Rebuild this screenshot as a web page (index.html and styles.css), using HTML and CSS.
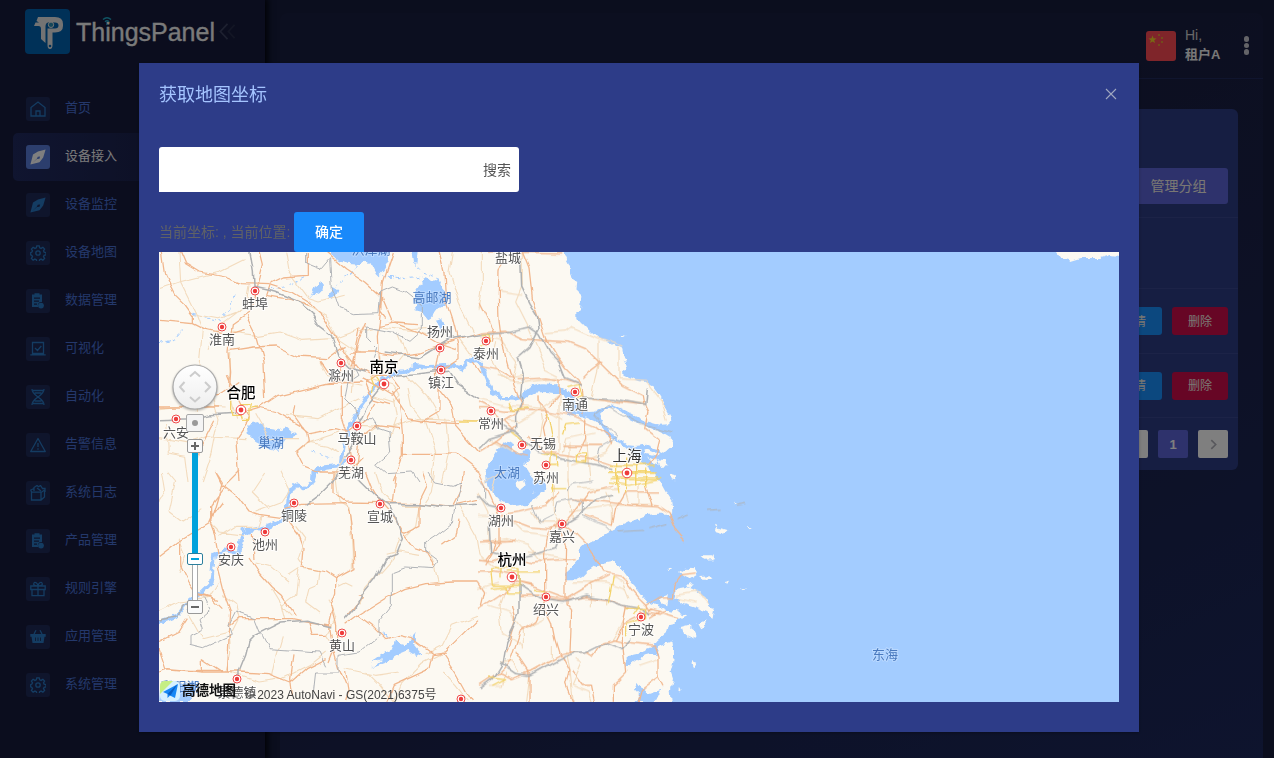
FILE: index.html
```html
<!DOCTYPE html>
<html lang="zh-CN">
<head>
<meta charset="utf-8">
<title>ThingsPanel</title>
<link rel="stylesheet" href="styles.css">
</head>
<body>
<svg class="defs" width="0" height="0">
  <symbol id="i-home" viewBox="0 0 16 16"><path class="ln" d="M1 6.500 8 1l7 5.500V15H1zM6 15v-5h4v5"/></symbol>
  <symbol id="i-pen" viewBox="0 0 16 16"><path class="fl" fill-rule="evenodd" d="M.4 15.600 3 5.500 8 2.600 15.600.4l-2.400 8-3.700 4.800zM2.300 13.900l4.700-3.900 2.500-.3.600-2.300-2.300.4-1 2z"/></symbol>
  <symbol id="i-gear" viewBox="0 0 16 16"><path class="ln" d="M6.800.8h2.400l.5 2 1.400.6 1.800-1.100 1.700 1.700-1.100 1.800.6 1.300 1.900.5v2.200l-1.900.6-.6 1.300 1.100 1.800-1.700 1.700-1.800-1.100-1.400.6-.5 1.900H6.800l-.5-1.900-1.400-.6-1.800 1.100-1.700-1.700 1.100-1.800-.6-1.300L.7 9.800V7.600l1.200-.5.6-1.300L1.400 4l1.700-1.700 1.800 1.100 1.400-.6z"/><circle class="ln" cx="8" cy="8" r="2.200"/></symbol>
  <symbol id="i-clip" viewBox="0 0 16 16"><path class="fl" fill-rule="evenodd" d="M2 1.500h2.500V.3h5V1.500H12V9a3.500 3.500 0 0 0-3.800 5H2zm2 3v1.200h6V4.500zm0 3V8.700h5V7.500zm0 3v1.200h3v-1.200z"/><circle class="fl" cx="11" cy="12.600" r="2.900"/></symbol>
  <symbol id="i-view" viewBox="0 0 16 16"><path class="ln" d="M2.500 1.500h11v11h-11zM.3 13.900h15.400M5 7l2.500 2.500L11.300 5"/></symbol>
  <symbol id="i-dna" viewBox="0 0 16 16"><path class="ln" d="M2 0c0 8 12 8 12 16M14 0c0 8-12 8-12 16M3 1.500h10M4.500 4h7M4.500 12h7M3 14.500h10"/></symbol>
  <symbol id="i-warn" viewBox="0 0 16 16"><path class="ln" stroke-linejoin="round" d="M8 1.500 15.300 14.500H.7zM8 6v4M8 11.300v1.500"/></symbol>
  <symbol id="i-box" viewBox="0 0 16 16"><path class="ln" d="M1.500 7v8h9.500l3.500-3V5l-3 2.200zM1.500 7 .8 5 4 3.500M11 7.500V15M4 6V2.500l3-2 1.500 1.300 2-1.300 2 3 2.500 0V7M7 3l4 3"/></symbol>
  <symbol id="i-gift" viewBox="0 0 16 16"><path class="ln" d="M.8 5h14.400v3.500H.8zM2 8.500v6.200h12V8.500M8 5v9.500M8 5C4 5 3 3.500 4 2s3.500 0 4 3c.5-3 3-4.500 4-3s0 3-4 3"/></symbol>
  <symbol id="i-basket" viewBox="0 0 16 16"><path class="fl" fill-rule="evenodd" d="M.3 5h15.400v2.800h-1.200L13.500 14h-11l-1-6.200H.3zM5 8.500V12h.8V8.500zm2.600 0V12h.8V8.500zm2.600 0V12h.8V8.500z"/><path class="ln" d="M4 5 6 1.300M12 5 10 1.300"/></symbol>
</svg>

<div class="app">
  <aside class="sidebar">
    <div class="brand">
      <svg class="mark" viewBox="0 0 45 45"><rect width="45" height="45" rx="4" fill="#0062b0"/><path fill="#e6e6e6" d="M11.500 12 13 8H30q8 0 8 7v2q0 6.500-8 6.500H27.500V36q0 4-2.500 4t-2.500-4V19.500H30q3.500 0 3.500-3T30 13.500h-7q-2.500.5-2.500 4V34l-4.500-4V20q0-3-2.500-3H9l1.500-3.500H14z"/><circle cx="26" cy="15.800" r="2.700" fill="#2b8fb4" stroke="#e6e6e6"/><circle cx="25" cy="37" r="1.300" fill="#0062b0"/></svg>
      <span class="name">ThingsPanel</span>
      <svg class="wifi" viewBox="0 0 10 9"><path d="M1 2.500Q5-1 9 2.500M3 4.700Q5 3 7 4.700"/><circle cx="5" cy="7.500" r=".8"/></svg>
      <svg class="fold" viewBox="0 0 18 18"><path d="M9 1 1.500 9 9 17"/><path class="dim" d="M16.500 2 10 9l6.500 7"/></svg>
    </div>
    <nav class="menu">
      <a class="item"><i><svg><use href="#i-home"/></svg></i><span>首页</span></a>
      <a class="item on"><i><svg><use href="#i-pen"/></svg></i><span>设备接入</span></a>
      <a class="item"><i><svg><use href="#i-pen"/></svg></i><span>设备监控</span></a>
      <a class="item"><i><svg><use href="#i-gear"/></svg></i><span>设备地图</span></a>
      <a class="item"><i><svg><use href="#i-clip"/></svg></i><span>数据管理</span></a>
      <a class="item"><i><svg><use href="#i-view"/></svg></i><span>可视化</span></a>
      <a class="item"><i><svg><use href="#i-dna"/></svg></i><span>自动化</span></a>
      <a class="item"><i><svg><use href="#i-warn"/></svg></i><span>告警信息</span></a>
      <a class="item"><i><svg><use href="#i-box"/></svg></i><span>系统日志</span></a>
      <a class="item"><i><svg><use href="#i-clip"/></svg></i><span>产品管理</span></a>
      <a class="item"><i><svg><use href="#i-gift"/></svg></i><span>规则引擎</span></a>
      <a class="item"><i><svg><use href="#i-basket"/></svg></i><span>应用管理</span></a>
      <a class="item"><i><svg><use href="#i-gear"/></svg></i><span>系统管理</span></a>
    </nav>
  </aside>
  <main class="main">
    <header class="top">
      <svg class="flag" viewBox="0 0 30 30"><rect width="30" height="30" rx="3" fill="#ff4a55"/><path fill="#f2d028" d="m6.500 4.500 1.100 2.800 2.900.1-2.300 1.800.9 2.900-2.600-1.700-2.500 1.700.8-2.900-2.300-1.800 3-.1z"/><g fill="#e0b030"><circle cx="13" cy="4" r="1"/><circle cx="16" cy="7" r="1"/><circle cx="16" cy="11" r="1"/><circle cx="13" cy="14" r="1"/></g></svg>
      <div class="user"><span>Hi,</span><b>租户A</b></div>
      <div class="dots"><i></i><i></i><i></i></div>
    </header>
    <section class="card">
      <div class="tools"><button class="btn group">管理分组</button></div>
      <div class="thead"></div>
      <div class="trow"><button class="btn info">详情</button><button class="btn del">删除</button></div>
      <div class="trow last"><button class="btn info">详情</button><button class="btn del">删除</button></div>
      <div class="pager"><span></span><span class="cur">1</span><span><svg viewBox="0 0 8 10"><path d="M2 1l4 4-4 4"/></svg></span></div>
    </section>
  </main>
</div>

<div class="mask">
  <div class="modal">
    <div class="mhead"><h3>获取地图坐标</h3><svg viewBox="0 0 12 12"><path d="M1 1l10 10M11 1 1 11"/></svg></div>
    <div class="search"><span>搜索</span></div>
    <div class="where"><span>当前坐标: , 当前位置:</span><button>确定</button></div>
    <div class="map">
      <svg class="canvas" viewBox="0 0 960 450">
        <defs>
          <filter id="rough" x="0" y="0" width="960" height="450" filterUnits="userSpaceOnUse" color-interpolation-filters="sRGB"><feTurbulence type="fractalNoise" baseFrequency=".045" numOctaves="2" seed="4"/><feDisplacementMap in="SourceGraphic" scale="8" xChannelSelector="R" yChannelSelector="G"/></filter>
          <filter id="shore" x="0" y="0" width="960" height="450" filterUnits="userSpaceOnUse" color-interpolation-filters="sRGB"><feTurbulence type="fractalNoise" baseFrequency=".14" numOctaves="2" seed="9"/><feDisplacementMap in="SourceGraphic" scale="7" xChannelSelector="R" yChannelSelector="G"/></filter>
          <g id="dot"><circle r="4" fill="#fff" stroke="#ef4a4a" stroke-width="1"/><circle r="2.200" fill="#ee3b3b"/></g>
          <g id="dotL"><circle r="4.800" fill="#fff" stroke="#ef4a4a" stroke-width="1"/><circle r="2.400" fill="#ee3b3b"/></g>
        </defs>
        <rect width="960" height="450" fill="#fcf9f2"/>
        <!-- sea, rivers and lakes -->
        <g filter="url(#shore)">
          <g transform="translate(320 0) scale(.33333)">
            <path class="sea" d="M257-30V0L265 20 275 40V60L280 80 295 90 292 115 307 130 303 175 292 180V205L312 215 330 235 350 252 390 270 430 292 433 310 445 350 425 358 440 370 470 385 500 390 520 398 540 425 552 445 560 470 578 503 570 517 540 518 500 508 470 492 430 470 400 457 375 464 345 482 320 484 305 478 290 455 278 425 262 412 225 396 190 394 160 402 135 422V440L165 422 200 420 240 425 258 438 268 462 255 478 275 490 320 494 350 508 375 532 390 556 418 566 430 585 455 598 470 610 490 628 510 640 518 658 530 675 545 693 560 720 580 750 583 775 570 785 540 785 500 790 450 810 400 835 350 865 320 875 300 895V920L275 950 258 965V985L290 985 310 975 330 955 350 940 400 930 420 940 450 980 470 1005 500 1045 530 1060 560 1075 625 1090 600 1102 590 1115 570 1120 565 1140 535 1165 515 1190 490 1200 445 1210 438 1238 460 1235 480 1215 520 1205 533 1210 545 1178 580 1168 585 1200 583 1230 575 1260 582 1280 575 1310 582 1400H2000V-30Z"/>
            <path class="land" d="M362 490 380 472 400 462 430 480 450 500 480 515 520 530 560 550 585 565 582 585 565 600 530 592 500 578 470 582 445 580 420 562 395 540 375 515ZM495 588 520 600 545 605 525 613 500 605ZM505 615 530 625 540 640 520 635ZM535 622 562 625 565 640 545 642ZM575 668 590 672 592 685 578 682Z"/>
            <path class="river" d="M-10 320 10 340 20 375 40 420 70 437 110 438 140 430"/>
            <path class="sea" d="M60 590 80 565 105 580 100 595 115 602 155 595 150 625 135 640 165 680 195 690 205 710 180 735 150 755 100 762 60 745 40 720 20 685 18 660 35 625 50 600Z"/>
            <path class="land" d="M110 690 135 685 140 700 125 712 112 702ZM162 715 168 722 160 725Z"/>
            <path class="sea" d="M440 1215 470 1207 490 1214 470 1228 455 1240 440 1238ZM465 1310 475 1290 490 1310 505 1325 550 1310 530 1350H470L480 1325Z"/>
          </g>
          <g class="land" transform="translate(320 220) scale(.33333)">
            <path d="M583 375 590 350 620 345 650 355 680 380 705 415 700 445 685 420 650 408 610 395ZM600 300 615 290 650 292 655 310 635 322ZM665 250 700 250 705 262 675 263ZM545 380 570 370 565 400 550 395ZM605 465 625 460 645 475 650 495 630 500 612 485ZM655 455 680 445 665 475ZM710 165 745 175 735 185 708 178ZM660 312 695 310 700 320 670 320ZM625 340 645 332 630 350ZM575 420 600 415 590 430ZM795 165 820 165 810 172ZM640 570 655 575 645 590ZM600 645 605 655 598 660ZM765 92 780 96 770 100ZM568 295 580 292 575 300ZM735 330 750 326 745 335ZM708 155 718 160 712 166ZM785 350 800 352 795 358Z"/>
          </g>
          <path class="land" d="M893-5 899 5 912 9 922 6 942 6 952 3 965 5V-5ZM461 82 466 83 463 85Z"/>
          <g transform="scale(.33333)">
            <path class="sea" d="M515-10 525 18 560 35 600 38 620 25 640 40 655 70 670 55 685 30 695-10ZM760-10H780L775 40 765 30ZM455 135 475 90 495 95 490 115 470 125ZM505 135 520 105 535 115 525 140ZM765 130 800 75 820 90 840 82 850 110 870 130 855 160 835 170 810 205 790 180 770 175ZM830 200 850 195 855 215 845 235ZM265 515 295 510 330 530 360 535 385 525 412 550 380 565 355 600 330 590 290 570 270 550Z"/>
            <path class="river" d="M960 320 930 325 910 350 880 340 850 342 800 345 770 342 745 360 715 362 680 375 650 400 630 430 605 465 585 500 570 530 555 580 548 640 500 645 470 660 460 690"/>
            <path class="creek" d="M510 140 540 90 580 60 610 25M670 70 740 80 790 75M330 110 380 105 440 75M100 190 180 205 215 170 225 130M0 275 50 260 70 235M460 600 520 615M840 80 790 60 760 30"/>
          </g>
          <g transform="translate(0 220) scale(.33333)">
            <path class="river" d="M495-10 460 0 458 35 435 52 415 40 395 50 388 80 385 125 360 150 320 165 250 180 245 215 238 245 200 235 165 250 160 300 155 335 120 370 80 400 55 430 0 452"/>
            <path class="sea" d="M630 575 665 550 700 532 708 500 722 515 735 520 770 480 765 515 790 545 775 555 745 535 720 545 680 570 640 585 670 560ZM665 480 685 490 690 500ZM5 630 35 625 60 640 100 625 115 650 95 690H0Z"/>
          </g>
        </g>
        <!-- road network -->
        <g filter="url(#rough)" class="roads">
          <g transform="scale(.33333)">
            <path class="minor" d="M60 0 65 90 110 180 130 235 120 340 115 480M0 110 60 90 180 60 260 20M100 185 180 200 260 170M215 240 300 250 360 240 430 265 520 260 600 230M270 100 260 160 180 220 150 290M380 0 390 60 450 140 480 150 560 130M430 150 500 190 540 260 600 300M600 240 660 225 760 235 840 260M700 210 760 230 830 225M0 470 90 460 200 465M160 440 180 500 160 600 130 690M0 560 80 575 150 555 260 560M20 510 25 600 80 610 90 690M215 300 210 430 230 500M480 330 500 370 560 390 610 400M560 290 585 360 580 420M740 370 800 430 840 500M750 410 760 460 800 510 830 600 820 690M440 570 500 580 540 600M410 600 450 570 540 540M520 680 600 560 660 520M600 520 700 525 780 500 960 510M860 500 870 600 850 690M900 260 930 300 960 320M700 440 710 500 690 560M290 490 330 560 420 560M380 490 480 500 600 440M880 0 870 60 900 160 940 240M720 250 740 300 700 350 630 375M640 380 700 400 720 430 700 450 640 430M660 300 670 360"/>
            <path class="major" d="M10 0 20 70 50 130 75 155 100 190 100 215 0 205M65 0 80 35 120 60 200 75 250 95 330 98 400 120 450 150 490 190 530 250 560 300 600 350 640 370M300 0 310 40 300 80 290 115 270 180 220 215 210 300 215 360 210 430M330 95 370 75 445 70 445 0M330 100 320 130 410 145 450 160M265 190 290 240 315 330 320 440M100 215 140 235 210 250 260 235M215 295 280 285 350 282 420 315 500 320 540 290 560 280M480 325 510 370M0 465 180 465M120 440 180 430 240 390M230 490 300 470 360 430 440 410 500 395 540 385 550 330M500 395 610 390M290 465 350 480 420 520 450 545 530 530 570 540 620 500 650 450M205 370 230 430 250 470 270 500 230 560 240 690M170 500 120 600 110 690M410 600 445 570 440 540 405 490 410 460M410 600 430 640 480 660 570 660 610 620M500 0 560 50 620 90 665 130 665 180 680 200M700 0 670 90 665 180 655 250 660 370M840 0 855 60 860 140 880 200 900 280 900 320 840 360M670 140 700 210 780 240 830 270 890 290M660 220 710 210 780 215M600 230 590 280 585 350M575 300 640 300 700 310 780 300 850 275 960 240M620 215 600 260 580 340M840 290 830 350 840 410 880 460 890 520 960 600M840 405 840 480 790 510M720 440 730 540 730 610 700 690M700 420 750 500 810 510 900 515M730 607 850 607 890 605 960 660M720 530 650 520 600 560 590 660M610 380 650 400 700 430 720 410 690 370 650 370 620 390 640 440 690 455M940 330 960 360M550 400 550 500 570 560 580 640"/>
            <path class="rail" d="M270 0 280 60 282 105 350 120 420 150 460 185 480 220 520 250 540 310 580 350 620 360M0 500 100 497 160 485 240 480M700 370 780 365 870 355 900 400 960 440M680 300 780 315 870 260 960 245M670 400 630 450 600 510 585 580 560 620"/>
            <path class="edge" d="M440 0 440 30 490 50 515 20 520 110 540 170 580 185 660 182 665 120 700 105 740 120 790 160 790 230 750 265 700 240 620 225 620 260 650 290 640 320M590 350 600 370 570 390 560 440 590 470 600 500 640 500 660 530 690 540 695 600 650 640 680 665 760 660 780 690"/>
            <path class="city" d="M215 440 215 490 240 490 245 505 270 505 270 470 300 465M240 455 280 455 275 480M635 375 645 400 640 420M650 370 670 400M900 510H960"/>
          </g>
          <g transform="translate(0 220) scale(.33333)">
            <path class="minor" d="M25 0 50 30 30 120 70 150 130 110M150 150 180 180 260 190M180 190 230 160 300 160 310 130M360 0 390 60 370 90 290 120M320 0 280 60 330 110M530 0 540 90 570 110 575 170 580 240 580 290M410 160 440 200 420 260 440 290 480 295 475 340 450 350 440 390 480 420M390 310 420 290 410 370 370 400 400 430M290 270 330 280 390 330M340 350 370 400 380 440 310 440M190 370 230 400 240 440 220 480M90 430 130 500 210 480 215 540 200 600M0 420 60 390 150 380 180 330M730 100 780 100 770 160 740 190M680 250 720 240 780 250M600 400 620 350 700 260 720 200M580 340 560 330 540 340M510 380 530 440 500 490 520 520M370 490 350 560 340 610M210 600 300 630 370 620 450 580 500 540M800 545 850 520 880 460 960 430M650 0 670 60 700 90M830 0 820 60 800 90M900 100 950 190 960 250M810 240 830 290 840 330M700 690 720 640 790 570 850 540M620 600 660 640 700 690M930 690 890 640 850 600M10 0 20 60 0 90M60 200 80 250 60 300M560 590 650 610 720 600"/>
            <path class="major" d="M170 0 190 40 240 80 270 120 300 130 370 140M170 0 190 30 155 150 170 190 180 250 175 290 190 350 215 420 210 500 205 600M0 255 60 210 150 155 160 130 190 90M65 215 65 280 90 330 115 365 180 385M240 0 200 40 155 100 155 145M385 145 420 190 435 230 430 285 500 300 530 320 530 360 515 400 530 460 530 520 510 570M530 320 585 290 580 190 570 120 560 95 430 97 380 110M525 0 525 60 560 90 670 92 780 95 870 105 960 85M620 0 640 50 665 90 700 130 730 180 770 230 800 240 830 290M790 0 805 40 780 90 780 160 740 180 720 180M960 330 880 330 800 335 740 350 680 380 600 430 560 460M600 430 640 460 680 500 720 490 760 500 820 545 860 540 900 500 960 440M820 545 810 590 700 640 680 690M850 540 890 600 940 690M215 460 240 440 310 440 400 440 450 450 520 460M520 410 510 450 520 520 540 590 560 640M270 255 300 300 340 345 370 370 410 430M280 180 285 260M500 490 460 490 450 450M0 510 60 480 85 440M0 530 20 590 130 600 240 600 330 605 395 630 440 590 500 560M130 600 130 560 190 600M405 550 395 620 400 670M570 430 610 380 600 370M910 0 900 60 880 100M900 140 890 190 850 220M0 600 30 590 90 595 190 595M710 0 700 90M120 370 160 380 190 410M560 600 570 660 560 690"/>
            <path class="rail" d="M540 0 520 30 480 70 440 100M600 20 650 70 690 100 710 140 730 200 710 250 680 260 650 320 610 370 590 410 560 445M520 465 440 445 370 450 320 475 290 490 270 510 260 550 240 600 240 630M690 95 780 95 860 105 960 100M0 450 60 440 70 400 110 380"/>
            <path class="edge" d="M810 0 830 30 880 40 905 30 890 100 880 150 830 190 800 210 800 240 840 270 830 290 740 285 700 300 700 400 660 450 660 490 600 540 540 550 540 600 470 600 460 690M500 580 480 540 330 530 310 490 290 440 230 420 210 460 220 490 130 530 90 520 90 490 130 470 120 440 155 410 140 380"/>
          </g>
          <g transform="translate(320 0) scale(.33333)">
            <path class="minor" d="M10 0 10 100 0 170M60 120 130 130M130 0 130 100 110 150 150 230 200 350 240 370M200 245 260 240 280 225 360 260 430 285M360 265 360 340 350 380 340 430M420 290 420 380 500 385 550 450 565 500M50 370 100 390 120 390 240 375M0 250 60 260 110 330 100 380M50 270 40 330 60 370M340 440 500 455M60 500 120 510 170 480 240 430M180 430 190 500 180 560M240 430 240 600M270 570 270 690M0 440 80 460 200 470 250 500M30 560 100 600M320 560 330 690M350 540 260 560 250 600M280 640 380 600 400 570M60 370 80 380 130 370"/>
            <path class="major" d="M30 0 250 3M80 30 60 60 58 130 60 200 70 280 90 350 105 400 120 440 130 460M130 0 150 50 160 140 180 200 200 260 230 310 260 350 290 380 310 400 315 490M0 150 20 190 45 240 40 270M0 240 80 235 130 260 190 265 270 270 320 290 360 330 400 370 430 400 490 430 495 460M110 380 200 375 260 385 310 400M310 380 330 360 370 330M0 340 50 350 100 380M130 460 115 480 50 520M0 470 50 470 80 475 200 475 280 490 350 520 380 545 400 580M180 430 180 450 210 475 190 530 200 580M240 380 240 430 215 460M320 435 420 450 500 460 510 480 500 530 540 560 530 600 510 640M0 600 50 570 110 520M50 565 110 600 150 610M150 550 200 600 270 610 340 620 400 640M250 580 370 580M320 500 320 560 300 600M0 450 40 470 110 540"/>
            <path class="rail" d="M125 20 128 105 150 150 175 190 180 230 150 290 115 320 130 370 125 430 130 450 110 490 110 530M0 245 80 240 150 225 180 245 210 300 240 330 260 380 310 400M310 435 400 440 500 460 505 410M30 500 110 540 180 600 280 625 400 650M0 590 30 560 110 535"/>
            <path class="edge" d="M350 490 390 460 430 485 490 515 580 540M350 490 415 560 360 590 350 630 380 650"/>
            <path class="city" d="M5 245 30 245 35 270 5 280M265 410 300 400 310 430 290 440M90 450 100 475 150 470M205 480 220 560 215 640M250 550 260 515 300 510M190 605 235 610 240 640 200 640M295 605H320V630H295ZM390 640H530M390 660H540M395 680H550M410 630V700M440 620V710M470 640V700M500 650V700M100 540 150 580"/>
          </g>
          <g transform="translate(320 220) scale(.33333)">
            <path class="minor" d="M60 0 40 60M30 130 30 230M0 130 80 130 130 180 210 190 270 170M20 210 80 200 150 220 190 270M160 120 180 150 240 150M220 40 220 120 240 150 230 190M270 20 280 140M380 60 400 110 400 160M440 60 450 100M480 30 480 100M300 50 420 50M270 120 400 100 520 100M340 330 340 400M400 310 430 330 450 380M150 240 260 260M80 340 60 400 70 480 130 520M30 400 90 420 130 470 130 530M200 440 180 450 140 470M280 330 380 330 440 350M380 380 380 400M260 540 270 600 280 690M290 560 310 570 280 640 330 660 340 690M220 520 220 560 150 600 140 690M60 570 100 570 120 600M590 370 650 360 690 400M600 380 650 390M0 250 60 300M0 350 60 330M480 580 540 560M400 500 430 450 440 400M80 600 70 640 30 640M20 30 80 0M0 60 30 120 30 180"/>
            <path class="major" d="M0 0 30 60 60 130 60 210 20 280M60 130 110 150 150 165 210 170 250 160 300 100 330 60 400 40M60 130 120 120 200 100 240 60M240 155 210 180 200 250 200 380 260 390M250 150 290 180 320 210 360 270 370 300 420 310 440 330 480 380 500 400M240 140 260 220 258 300 258 400 275 420 270 540M320 130 400 160 410 110 440 60 540 60M280 80 380 90 460 100 540 105 570 125 590 170 620 205M500 40 520 105M0 265 40 270 90 250 160 270 290 260M0 210 110 205M20 265 40 240 50 200M120 370 180 370 260 385 320 375 400 385 450 410 500 410 600 440M110 330 180 350 260 380 310 350 390 310M500 400 540 375 580 375 585 340 610 305 650 300M500 400 510 420M440 400 430 450 430 510 440 600 400 640 400 690M270 540 330 540 345 550 370 510 410 500 430 460 470 440M200 390 170 450 120 480 90 570 60 600 0 640M0 410 60 370 110 330 160 340M0 300 40 300 100 310M195 400 220 450 230 500 245 550 270 600 260 640 280 690M60 600 100 620 150 600 240 550 280 540M110 540 150 600 150 690M280 600 310 640 340 640 350 690M400 500 440 510 530 520 540 550 540 610 555 640M480 690 490 650 540 615M0 330 20 360 10 400M100 400 110 440 80 540M480 420 540 430 560 420M510 440 540 420"/>
            <path class="rail" d="M30 150 35 240 110 260 180 245 230 230 250 160 300 130 350 80 400 70M0 70 30 100 70 110M120 310 120 370 120 430 80 510 70 570 40 620 0 650M60 570 110 605 150 610 240 560 290 540 320 540 380 510 430 530 460 500M120 340 180 380 250 390 320 370 380 380 430 400 490 410 510 430"/>
            <path class="edge" d="M160 100 180 150 220 130 230 90 290 80 310 90 310 130 350 150 380 160 400 180M270 60 280 40 340 30M0 20 20 40 20 80M415 180 490 175M505 170 565 155M590 140 625 125M690 115 725 112M770 100 800 94"/>
            <path class="city" d="M390 0H530M400 15H540M390 30 450 40 540 20M410 0 420 60M440 0V60M470 0V40M500 0V40M210 50H265M215 20V60M35 290H120V340H40ZM35 350 80 345M80 345V360H120M60 290V320M80 300H180M165 355 200 360M385 390 400 310M440 410 500 410 500 440 440 460 440 490M480 400 460 430M30 615 80 620 40 640"/>
          </g>
        </g>
        <g class="dots-layer">
          <use href="#dot" x="96" y="39"/><use href="#dot" x="63" y="75"/><use href="#dot" x="182" y="111"/><use href="#dotL" x="225" y="132"/><use href="#dotL" x="82" y="158"/><use href="#dot" x="281" y="96"/><use href="#dot" x="282" y="118"/><use href="#dot" x="327" y="89"/><use href="#dot" x="17" y="167"/><use href="#dot" x="198" y="174"/><use href="#dot" x="192" y="208"/><use href="#dot" x="135" y="251"/><use href="#dot" x="106" y="280"/><use href="#dot" x="72" y="295"/><use href="#dot" x="221" y="252"/><use href="#dot" x="183" y="381"/><use href="#dot" x="78" y="427"/><use href="#dot" x="302" y="447"/><use href="#dot" x="332" y="159"/><use href="#dot" x="363" y="193"/><use href="#dot" x="387" y="213"/><use href="#dot" x="416" y="140"/><use href="#dotL" x="468" y="221"/><use href="#dot" x="342" y="256"/><use href="#dot" x="403" y="272"/><use href="#dotL" x="353" y="325"/><use href="#dot" x="387" y="345"/><use href="#dot" x="482" y="365"/>
        </g>
        <g class="labels">
          <text x="96" y="56">蚌埠</text><text x="63" y="92">淮南</text><text x="182" y="128">滁州</text><text x="281" y="84">扬州</text><text x="282" y="135">镇江</text><text x="327" y="106">泰州</text><text x="349" y="10">盐城</text><text x="17" y="185">六安</text><text x="198" y="191">马鞍山</text><text x="192" y="225">芜湖</text><text x="135" y="268">铜陵</text><text x="106" y="297">池州</text><text x="72" y="312">安庆</text><text x="221" y="269">宣城</text><text x="183" y="398">黄山</text><text x="78" y="445">景德镇</text><text x="332" y="176">常州</text><text x="384" y="196">无锡</text><text x="387" y="230">苏州</text><text x="416" y="157">南通</text><text x="342" y="273">湖州</text><text x="403" y="289">嘉兴</text><text x="387" y="362">绍兴</text><text x="482" y="382">宁波</text>
          <text class="big" x="225" y="120">南京</text><text class="big" x="82" y="146">合肥</text><text class="big soft" x="468" y="209">上海</text><text class="big" x="353" y="313">杭州</text>
          <g class="water"><text x="273" y="50">高邮湖</text><text x="212" y="2">洪泽湖</text><text x="112" y="195">巢湖</text><text x="348" y="225">太湖</text><text x="726" y="407">东海</text><text x="21" y="439">鄱阳湖</text></g>
        </g>
      </svg>
      <div class="ctrl">
        <svg class="pan" viewBox="0 0 46 46"><defs><linearGradient id="pg" x2="0" y2="1"><stop stop-color="#fff"/><stop offset="1" stop-color="#eee"/></linearGradient></defs><circle cx="23" cy="23" r="22" fill="url(#pg)" stroke="#aaa" stroke-width="1.200"/><path d="m18 12.500 5-4.500 5 4.500M18 33l5 4.500 5-4.500M12.500 18 8 23l4.500 5M33 18l5 5-5 5"/></svg>
        <div class="loc"><i></i></div>
        <div class="zbtn plus"></div>
        <div class="track"><div class="fill"></div></div>
        <div class="zbtn"></div>
        <div class="zbtn knob"></div>
      </div>
      <div class="credit">
        <svg viewBox="0 0 20 20"><rect width="20" height="20" rx="5" fill="#d5f0ff"/><path d="M0 5Q0 0 5 0h8L0 13z" fill="#c5ee84"/><path d="m3 11 15-8-3 14-5-2.500-2.500 2.500v-4z" fill="#1687f5"/><path d="m7.500 13 10-10-7 11.500z" fill="#075fc7"/></svg>
        <b>高德地图</b><span>© 2023 AutoNavi - GS(2021)6375号</span>
      </div>
    </div>
  </div>
</div>
</body>
</html>
```
FILE: styles.css
```css
* { box-sizing: border-box; }
body {
  margin: 0;
  width: 1274px;
  height: 758px;
  overflow: hidden;
  background: #161c3c;
  font-family: "Liberation Sans", "Noto Sans CJK SC", sans-serif;
  font-size: 14px;
  color: #fff;
}
button { border: 0; font: inherit; color: inherit; padding: 0 0 2px; }
.defs { position: absolute; }
.ln { fill: none; stroke: currentColor; stroke-width: 1.3; }
.fl { fill: currentColor; }

.app { display: flex; height: 758px; }
.sidebar {
  flex: none;
  width: 265px;
  background: #161b3c;
  box-shadow: 1px 0 6px 2px #04060f;
}
.brand { display: flex; align-items: flex-start; height: 85px; padding: 9px 0 0 25px; position: relative; }
.mark { width: 45px; height: 45px; }
.name { margin: 9px 0 0 6px; font-size: 25px; line-height: 29px; color: #f4f4f4; -webkit-text-stroke: .3px #f4f4f4; }
.wifi { position: absolute; left: 102px; top: 17px; width: 10px; height: 9px; fill: #20a8c8; }
.wifi path { fill: none; stroke: #20a8c8; stroke-width: 1.4; }
.fold { width: 17px; height: 17px; margin: 14px 0 0 4px; fill: none; stroke: #3c4160; stroke-width: 1.8; }
.fold .dim { stroke: #272c4a; }
.menu { padding-left: 13px; }
.item {
  display: flex;
  align-items: center;
  height: 48px;
  padding-left: 13px;
  font-size: 13px;
  line-height: 20px;
  color: #4870d6;
  border-radius: 5px 0 0 5px;
}
.item span { padding-bottom: 2px; }
.item i {
  display: grid;
  place-items: center;
  width: 24px;
  height: 24px;
  margin-right: 15px;
  border-radius: 3px;
  background: #1f2a58;
  color: #2878c4;
}
.item svg { width: 16px; height: 16px; }
.item.on { background: linear-gradient(90deg, #202a60, #161b3c); color: #f5f5f5; }
.item.on i { background: #587ddb; color: #fff; }

.main {
  flex: 1;
  margin: 13px 11px 0 15px;
  border-radius: 8px 8px 0 0;
  background: linear-gradient(155deg, #191e40 35%, #1c285c);
}
.top {
  display: flex;
  justify-content: flex-end;
  height: 66px;
  padding: 13px 11px 0 0;
  border-bottom: 1px solid #202b5c;
}
.flag { width: 30px; height: 30px; margin: 5px 9px 0 0; }
.user { width: 56px; color: #d0d0d0; line-height: 20px; display: flex; flex-direction: column; }
.user b { font-size: 13px; color: #f0f0f0; }
.user span { margin-top: -1px; }
.dots { display: flex; flex-direction: column; gap: 1px; margin-top: 10px; width: 11px; align-items: center; }
.dots i { width: 5.500px; height: 5.500px; border-radius: 50%; background: #c8c8d0; }
.card {
  margin: 30px 25px 0;
  height: 361px;
  border-radius: 6px;
  background: #2d3c84;
}
.tools, .thead, .trow { border-bottom: 1px solid #38478f; }
.tools { height: 109px; padding: 59px 10px 0; display: flex; justify-content: flex-end; }
.thead { height: 71px; }
.trow { height: 65px; display: flex; justify-content: flex-end; align-items: center; gap: 10px; padding-right: 10px; font-size: 12px; }
.trow.last { height: 64px; }
.btn { border-radius: 3px; color: #f4f0e8; }
.group { width: 99px; height: 36px; background: #5d65d8; }
.info, .del { width: 56px; height: 28px; }
.info { background: #1890ff; }
.del { background: #cf0c4b; }
.pager { display: flex; justify-content: flex-end; gap: 10px; padding: 12px 10px 0 0; }
.pager span {
  display: grid;
  place-items: center;
  width: 30px;
  height: 28px;
  border-radius: 2px;
  background: #fff;
  font: bold 13px "Liberation Sans", sans-serif;
}
.pager .cur { background: #5d65d8; }
.pager svg { width: 9px; height: 11px; fill: none; stroke: #b0b0b8; stroke-width: 1.500; }

.mask { position: fixed; inset: 0; background: rgba(0, 0, 0, .5); padding: 63px 0 0 139px; }
.modal {
  width: 1000px;
  height: 669px;
  padding: 20px 20px 0;
  background: #2d3c88;
  box-shadow: 0 1px 3px rgba(0, 0, 0, .3);
}
.mhead { display: flex; justify-content: space-between; }
.mhead h3 { margin: 0; font-size: 18px; line-height: 24px; font-weight: 400; color: #a4c4ff; }
.mhead svg { width: 12px; height: 12px; margin: 5px 2px 0 0; fill: none; stroke: #a0a8c0; stroke-width: 1.100; }
.search {
  display: flex;
  align-items: center;
  justify-content: flex-end;
  width: 360px;
  height: 45px;
  margin-top: 40px;
  padding: 0 8px 2px 0;
  border-radius: 3px 3px 3px 0;
  background: #fff;
  color: #555;
}
.where { display: flex; align-items: center; height: 40px; margin-top: 20px; color: #606266; }
.where span { width: 135px; padding-bottom: 2px; white-space: nowrap; }
.where button { width: 70px; height: 40px; border-radius: 3px 3px 0 3px; background: #1989fa; color: #fff; font-weight: 500; }

.map { position: relative; height: 450px; overflow: hidden; background: #a3ccff; }
.canvas { display: block; width: 960px; height: 450px; }
.sea { fill: #a3ccff; }
.land { fill: #fcf9f2; }
.river { fill: none; stroke: #a3ccff; stroke-width: 11; }
.creek { fill: none; stroke: #a3ccff; stroke-width: 3; stroke-dasharray: 12 8; }
.roads path { fill: none; stroke-linejoin: round; }
.roads .minor { stroke: #f3dbbd; stroke-width: 3.300; }
.roads .major { stroke: #f1b68c; stroke-width: 3.800; }
.roads .rail { stroke: #aeb0b2; stroke-width: 4.500; }
.roads .edge { stroke: #b0b3b7; stroke-width: 3; }
.roads .city { stroke: #f3d269; stroke-width: 3.800; }
.labels text {
  font: 13px "Liberation Sans", "Noto Sans CJK SC", sans-serif;
  text-anchor: middle;
  fill: #555;
  stroke: #fff;
  stroke-width: 2px;
  stroke-opacity: .85;
  paint-order: stroke;
}
.labels .big { font-size: 14.500px; font-weight: 500; fill: #000; }
.labels .soft { fill: #333; font-weight: 400; }
.labels .water text { fill: #4a7abf; stroke-opacity: .25; }

.ctrl { position: absolute; left: 13px; top: 112px; width: 46px; display: flex; flex-direction: column; align-items: center; }
.pan { width: 46px; height: 46px; filter: drop-shadow(0 1px 1px rgba(0, 0, 0, .3)); }
.pan path { fill: none; stroke: #ccc; stroke-width: 2; }
.loc { display: grid; place-items: center; width: 18px; height: 18px; margin-top: 4px; border: 1px solid #aaa; border-radius: 2px; background: #f4f4f4; }
.loc i { width: 6px; height: 6px; border-radius: 50%; background: #999; }
.zbtn {
  position: relative;
  width: 16px;
  height: 14px;
  border: 1px solid #999;
  border-radius: 2px;
  background: linear-gradient(90deg, #666, #666) center / 8px 2px no-repeat, #fafafa;
}
.plus { margin-top: 7px; background: linear-gradient(#666, #666) center / 8px 2px no-repeat, linear-gradient(#666, #666) center / 2px 8px no-repeat, #fafafa; }
.track { width: 6px; height: 147px; border: solid #aaa; border-width: 0 1px; background: #fff; }
.fill { width: 6px; height: 101px; margin-left: -1px; background: #00a2dc; }
.knob { position: absolute; left: 15px; top: 189px; height: 12px; border-color: #2c7f9c; background: linear-gradient(#00a2dc, #00a2dc) center / 8px 2px no-repeat, #fff; }
.credit { position: absolute; left: 1px; bottom: 0; display: flex; align-items: center; height: 22px; color: #222; white-space: nowrap; }
.credit svg { width: 20px; height: 20px; }
.credit b { width: 64px; margin-left: 2px; font-size: 13.500px; line-height: 20px; color: #111; }
.credit span { margin-top: 8px; margin-left: -1px; font-size: 12px; line-height: 14px; color: #444; }
```
